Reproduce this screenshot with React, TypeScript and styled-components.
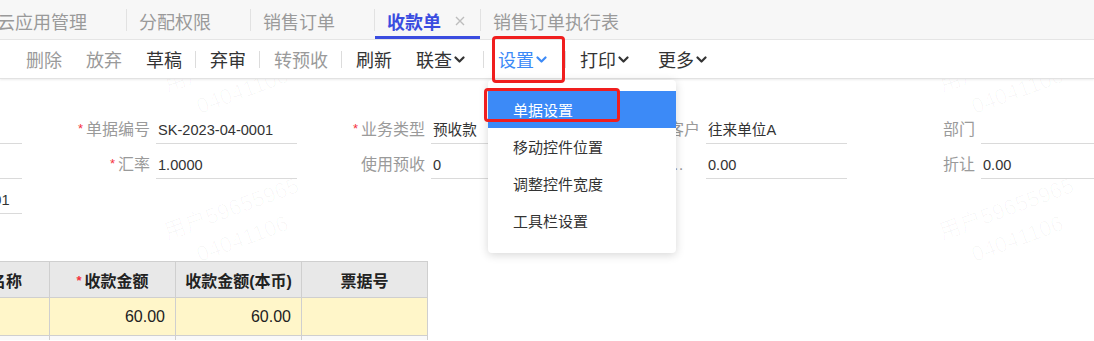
import React from 'react';
import styled, { createGlobalStyle, css } from 'styled-components';

const GlobalStyle = createGlobalStyle`
  html, body {
    margin: 0;
    padding: 0;
    background: #fff;
  }
  body {
    font-family: "Liberation Sans", "Noto Sans CJK SC", sans-serif;
    overflow: hidden;
  }
`;

const BLUE = '#3c8af7';

const Page = styled.div`
  position: relative;
  width: 1094px;
  height: 341px;
  overflow: hidden;
  background: #fff;
`;

/* ---------- tabs ---------- */

const TabBar = styled.div`
  display: flex;
  align-items: stretch;
  height: 39px;
  background: #f7f7f7;
  border-bottom: 1px solid #e6e6e6;
`;

const TabList = styled.div`
  display: flex;
  align-items: center;
  margin-left: -15px;
`;

const Tab = styled.div<{ $active?: boolean }>`
  position: relative;
  display: flex;
  align-items: center;
  height: 39px;
  padding: 2px 15px 0 12px;
  box-sizing: border-box;
  font-size: 18px;
  white-space: nowrap;
  color: #9a9a9a;

  ${(p) =>
    p.$active &&
    css`
      color: #3a4ce0;
      font-weight: bold;

      &::after {
        content: '';
        position: absolute;
        left: 0;
        right: 0;
        bottom: 0;
        height: 3px;
        background: #3a4ce0;
      }
    `}
`;

const TabClose = styled.span<{ $visible?: boolean }>`
  display: flex;
  width: 10px;
  margin-left: 14px;
  visibility: ${(p) => (p.$visible ? 'visible' : 'hidden')};
`;

const TabDivider = styled.span`
  width: 1px;
  height: 22px;
  background: #e2e2e2;
`;

/* ---------- toolbar ---------- */

const Toolbar = styled.div`
  position: relative;
  z-index: 5;
  display: flex;
  align-items: stretch;
  height: 38px;
  padding-left: 14px;
  background: #fff;
  border-bottom: 1px solid #e2e2e2;
  box-shadow: 0 1px 2px rgba(0, 0, 0, 0.08);
`;

type Tone = 'muted' | 'normal' | 'active';

const toneColor: Record<Tone, string> = {
  muted: '#9a9a9a',
  normal: '#333',
  active: BLUE,
};

const ToolButton = styled.div<{ $tone: Tone; $menu?: boolean }>`
  position: relative;
  display: flex;
  align-items: center;
  padding: 0 ${(p) => (p.$menu ? 17 : 12)}px 0 12px;
  font-size: 18px;
  color: ${(p) => toneColor[p.$tone]};
  white-space: nowrap;
  cursor: pointer;
`;

const Chevron = styled.svg`
  margin-left: 2px;
  width: 11px;
  height: 7px;
`;

const ToolDivider = styled.span`
  align-self: center;
  width: 1px;
  height: 17px;
  margin: 0 2px 0 1px;
  background: #dcdcdc;
`;

const Highlight = styled.span<{ $left: number; $top: number; $w: number; $h: number }>`
  position: absolute;
  left: ${(p) => p.$left}px;
  top: ${(p) => p.$top}px;
  width: ${(p) => p.$w}px;
  height: ${(p) => p.$h}px;
  box-sizing: border-box;
  border: 3px solid #f01e1e;
  border-radius: 4px;
  z-index: 20;
  pointer-events: none;
`;

const Menu = styled.div`
  position: absolute;
  left: 2px;
  top: 40px;
  width: 188px;
  padding: 11px 0 14px;
  background: #fff;
  border-radius: 4px;
  box-shadow: 0 2px 10px rgba(0, 0, 0, 0.16);
  z-index: 10;
`;

const MenuItem = styled.div<{ $active?: boolean }>`
  display: flex;
  align-items: center;
  height: 37px;
  padding-left: 25px;
  font-size: 15px;
  color: ${(p) => (p.$active ? '#fff' : '#333')};
  background: ${(p) => (p.$active ? BLUE : 'transparent')};
`;

/* ---------- body ---------- */

const Body = styled.div`
  position: relative;
  height: 261px;
  overflow: hidden;
`;

const Watermark = styled.div<{ $x: number; $y: number }>`
  position: absolute;
  left: ${(p) => p.$x}px;
  top: ${(p) => p.$y}px;
  transform: translate(-50%, -50%) rotate(-20deg);
  font-size: 22px;
  line-height: 1.45;
  text-align: center;
  white-space: nowrap;
  color: rgba(0, 0, 0, 0.028);
  pointer-events: none;
`;

const Form = styled.div`
  display: grid;
  grid-template-columns: repeat(5, 275px);
  margin-left: -253px;
  padding-top: 30px;
`;

const Field = styled.div`
  display: flex;
  align-items: flex-end;
  height: 35px;
`;

const Label = styled.span`
  width: 128px;
  margin-right: 6px;
  line-height: 28px;
  font-size: 16px;
  color: #9a9a9a;
  text-align: right;
  white-space: nowrap;
  overflow: hidden;
  text-overflow: ellipsis;
`;

const Star = styled.span`
  margin-right: 3px;
  font-size: 13px;
  color: #f5313d;
  vertical-align: 2px;
`;

const Input = styled.div`
  width: 141px;
  height: 28px;
  padding-left: 2px;
  box-sizing: border-box;
  line-height: 28px;
  font-size: 14.6px;
  color: #333;
  white-space: nowrap;
  overflow: hidden;
  border-bottom: 1px solid #dadada;
`;

const Grid = styled.table`
  margin: 47px 0 0 -102px;
  border-collapse: collapse;
  table-layout: fixed;
  font-size: 16px;
`;

const HeadCell = styled.th<{ $w: number }>`
  width: ${(p) => p.$w}px;
  height: 35px;
  padding: 0;
  background: #e8e8e8;
  border: 1px solid #cfcfcf;
  color: #222;
  font-weight: 600;
  text-align: center;
  white-space: nowrap;
`;

const Row = styled.tr<{ $current?: boolean }>`
  background: ${(p) => (p.$current ? '#fff6c9' : '#f9f9f9')};
`;

const Cell = styled.td`
  height: 37px;
  padding: 0 10px 0 0;
  border: 1px solid #cfcfcf;
  color: #222;
  text-align: right;
`;

/* ---------- data ---------- */

const tabs = [
  { label: '云应用管理' },
  { label: '分配权限' },
  { label: '销售订单' },
  { label: '收款单', active: true },
  { label: '销售订单执行表' },
];

type Tool = { label: string; tone: Tone; menu?: boolean; divider?: boolean };

const tools: Tool[] = [
  { label: '删除', tone: 'muted' },
  { label: '放弃', tone: 'muted' },
  { label: '草稿', tone: 'normal', divider: true },
  { label: '弃审', tone: 'normal', divider: true },
  { label: '转预收', tone: 'muted', divider: true },
  { label: '刷新', tone: 'normal' },
  { label: '联查', tone: 'normal', menu: true, divider: true },
  { label: '设置', tone: 'active', menu: true, divider: true },
  { label: '打印', tone: 'normal', menu: true },
  { label: '更多', tone: 'normal', menu: true },
];

const settingsMenu = ['单据设置', '移动控件位置', '调整控件宽度', '工具栏设置'];

type FieldData = { label: string; value?: string; required?: boolean };

const fields: FieldData[] = [
  { label: '单据日期', required: true },
  { label: '单据编号', value: 'SK-2023-04-0001', required: true },
  { label: '业务类型', value: '预收款', required: true },
  { label: '客户', value: '往来单位A' },
  { label: '部门' },
  { label: '币种' },
  { label: '汇率', value: '1.0000', required: true },
  { label: '使用预收', value: '0' },
  { label: '收款金额合计本币金额', value: '0.00' },
  { label: '折让', value: '0.00' },
  { label: '源单号', value: 'YS-20230401-0001' },
];

const watermarks = [
  { x: 237, y: -3 },
  { x: 237, y: 145 },
  { x: 1012, y: -3 },
  { x: 1012, y: 145 },
];

const ChevronIcon = () => (
  <Chevron viewBox="0 0 11 7">
    <polyline
      points="1.5,1.5 5.5,5.5 9.5,1.5"
      fill="none"
      stroke="currentColor"
      strokeWidth="2.2"
      strokeLinecap="round"
      strokeLinejoin="round"
    />
  </Chevron>
);

const CloseIcon = () => (
  <svg width="10" height="10" viewBox="0 0 10 10">
    <path d="M1 1 L9 9 M9 1 L1 9" stroke="#bdbdbd" strokeWidth="1.4" />
  </svg>
);

export default function App() {
  return (
    <Page>
      <GlobalStyle />

      <TabBar>
        <TabList>
          {tabs.map((t, i) => (
            <React.Fragment key={t.label}>
              {i > 0 && <TabDivider />}
              <Tab $active={t.active}>
                {t.label}
                <TabClose $visible={t.active}>
                  <CloseIcon />
                </TabClose>
              </Tab>
            </React.Fragment>
          ))}
        </TabList>
      </TabBar>

      <Toolbar>
        {tools.map((t) => (
          <React.Fragment key={t.label}>
            <ToolButton $tone={t.tone} $menu={t.menu}>
              {t.label}
              {t.menu && <ChevronIcon />}
              {t.label === '设置' && (
                <>
                  <Highlight $left={6} $top={-4} $w={73} $h={47} />
                  <Menu>
                    {settingsMenu.map((m, i) => (
                      <MenuItem key={m} $active={i === 0}>
                        {m}
                      </MenuItem>
                    ))}
                    <Highlight $left={-4} $top={8} $w={136} $h={34} />
                  </Menu>
                </>
              )}
            </ToolButton>
            {t.divider && <ToolDivider />}
          </React.Fragment>
        ))}
      </Toolbar>

      <Body>
        {watermarks.map((w, i) => (
          <Watermark key={i} $x={w.x} $y={w.y}>
            用户59655965
            <br />
            04041106
          </Watermark>
        ))}

        <Form>
          {fields.map((f, i) => (
            <Field key={i}>
              <Label>
                {f.required && <Star>*</Star>}
                {f.label}
              </Label>
              <Input>{f.value}</Input>
            </Field>
          ))}
        </Form>

        <Grid>
          <thead>
            <tr>
              <HeadCell $w={150}>结算方式名称</HeadCell>
              <HeadCell $w={125}>
                <Star>*</Star>收款金额
              </HeadCell>
              <HeadCell $w={125}>收款金额(本币)</HeadCell>
              <HeadCell $w={125}>票据号</HeadCell>
            </tr>
          </thead>
          <tbody>
            <Row $current>
              <Cell />
              <Cell>60.00</Cell>
              <Cell>60.00</Cell>
              <Cell />
            </Row>
            <Row>
              <Cell />
              <Cell />
              <Cell />
              <Cell />
            </Row>
          </tbody>
        </Grid>
      </Body>
    </Page>
  );
}
